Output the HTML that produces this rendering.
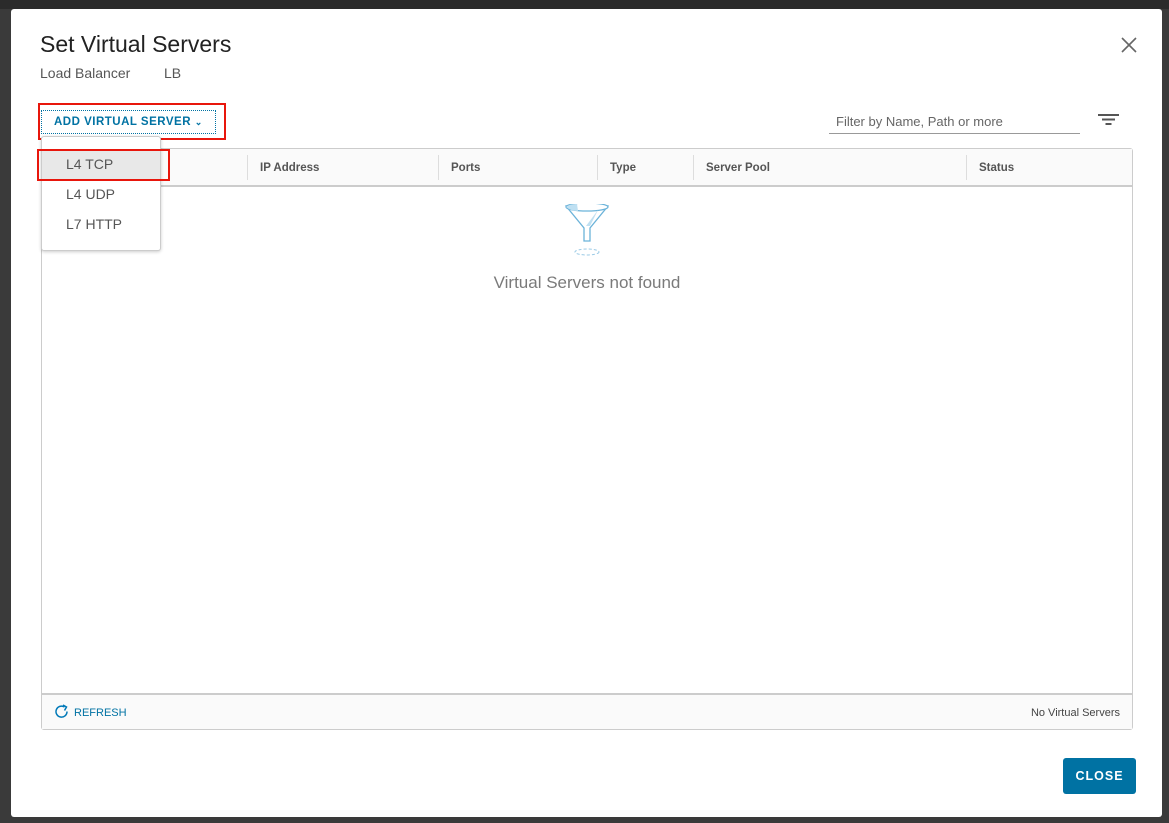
<!DOCTYPE html>
<html><head><style>
*{box-sizing:border-box;margin:0;padding:0}
body{width:1169px;height:823px;background:#3a3a3a;font-family:"Liberation Sans",sans-serif;position:relative;overflow:hidden}
.topbar{position:absolute;left:0;top:0;width:1169px;height:9px;background:#2b2b2b}
.modal{position:absolute;left:11px;top:9px;width:1151px;height:808px;background:#fff;border-radius:3px}
.abs{position:absolute}
h1{position:absolute;left:29px;top:22px;font-size:23px;font-weight:normal;color:#222}
.sub{position:absolute;top:56px;font-size:14px;color:#565656}
.btn{position:absolute;left:30px;top:101px;width:175px;height:24px;border:1px dotted #0072a3;color:#0072a3;font-size:11.5px;font-weight:bold;letter-spacing:.5px;line-height:23px;padding-left:12px}
.red{position:absolute;border:2px solid #e8160c}
.table{position:absolute;left:30px;top:139px;width:1092px;height:582px;border:1px solid #ccc;border-radius:3px;background:#fff}
.thead{position:absolute;left:0;top:0;width:100%;height:38px;background:#fafafa;border-bottom:2px solid #ccc}
.th{position:absolute;top:13px;font-size:11.5px;font-weight:bold;color:#555}
.sep{position:absolute;top:6px;width:1px;height:25px;background:#ddd}
.tfoot{position:absolute;left:0;bottom:0;width:100%;height:36px;background:#fafafa;border-top:2px solid #ccc}
.menu{position:absolute;left:30px;top:127px;width:120px;height:115px;background:#fff;border:1px solid #ccc;border-radius:3px;box-shadow:0 1px 3px rgba(0,0,0,.2)}
.mi{position:absolute;left:0;width:100%;height:30px;line-height:30px;padding-left:24px;font-size:14px;color:#565656}
</style></head><body>
<div class="topbar"></div>
<div class="modal">
<h1>Set Virtual Servers</h1>
<div class="sub" style="left:29px">Load Balancer</div>
<div class="sub" style="left:153px">LB</div>
<svg class="abs" style="left:1110px;top:28px" width="16" height="16"><path d="M1 1L15 15M15 1L1 15" stroke="#666" stroke-width="1.6"/></svg>
<div class="abs" style="left:818px;top:104px;width:251px;height:21px;border-bottom:1px solid #999;font-size:13px;color:#666;padding-left:7px;line-height:18px">Filter by Name, Path or more</div>
<svg class="abs" style="left:1087px;top:104px" width="22" height="14"><path d="M0 2H21M4 6.5H17M7.5 11H13.5" stroke="#555" stroke-width="2"/></svg>
<div class="table">
 <div class="thead">
  <div class="sep" style="left:205px"></div><div class="th" style="left:218px">IP Address</div>
  <div class="sep" style="left:396px"></div><div class="th" style="left:409px">Ports</div>
  <div class="sep" style="left:555px"></div><div class="th" style="left:568px">Type</div>
  <div class="sep" style="left:651px"></div><div class="th" style="left:664px">Server Pool</div>
  <div class="sep" style="left:924px"></div><div class="th" style="left:937px">Status</div>
 </div>
 <svg class="abs" style="left:521px;top:55px" width="48" height="54"><path d="M3 2 Q24 -3 45 2 L27 24 V37 H21 V24 Z" fill="#fff" stroke="#6bb3d9" stroke-width="1.3"/><ellipse cx="24" cy="3" rx="21" ry="4" fill="#fff" stroke="#6bb3d9" stroke-width="1.3"/><path d="M3 3 Q6 0 14 0 L15 7 Q8 7 3 3Z M35 6 L23 22 L27 22 Z" fill="#bfe0f2"/><ellipse cx="24" cy="48" rx="12" ry="3" fill="none" stroke="#9ccbe6" stroke-dasharray="3 2"/></svg>
 <div class="abs" style="left:0;width:100%;top:124px;text-align:center;font-size:17px;color:#7a7a7a">Virtual Servers not found</div>
 <div class="tfoot">
  <svg class="abs" style="left:12px;top:9px" width="16" height="16"><path d="M13 7.5A5.5 5.5 0 1 1 10.5 3" fill="none" stroke="#0079b8" stroke-width="1.5"/><path d="M9 1L12.5 3L10.5 6.5" fill="none" stroke="#0079b8" stroke-width="1.5"/></svg>
  <div class="abs" style="left:32px;top:12px;font-size:11px;color:#0072a3">REFRESH</div>
  <div class="abs" style="right:12px;top:12px;font-size:11px;color:#444">No Virtual Servers</div>
 </div>
</div>
<div class="btn">ADD VIRTUAL SERVER <span style="font-size:9px">&#8964;</span></div>
<div class="red" style="left:27px;top:94px;width:188px;height:37px"></div>
<div class="menu">
 <div class="mi" style="top:12px;background:#e8e8e8">L4 TCP</div>
 <div class="mi" style="top:42px">L4 UDP</div>
 <div class="mi" style="top:72px">L7 HTTP</div>
</div>
<div class="red" style="left:26px;top:140px;width:133px;height:32px"></div>
<div class="abs" style="left:1052px;top:749px;width:73px;height:36px;background:#0072a3;border-radius:3px;color:#fff;font-size:12.5px;font-weight:bold;letter-spacing:1px;text-align:center;line-height:36px">CLOSE</div>
</div>
</body></html>
